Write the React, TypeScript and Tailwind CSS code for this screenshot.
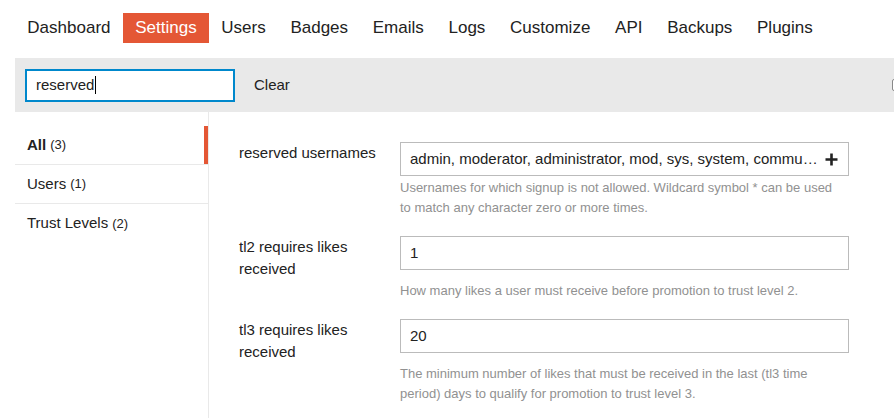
const navItems = [
  "Dashboard",
  "Settings",
  "Users",
  "Badges",
  "Emails",
  "Logs",
  "Customize",
  "API",
  "Backups",
  "Plugins",
];

const categories = [
  { name: "All", count: 3, active: true },
  { name: "Users", count: 1, active: false },
  { name: "Trust Levels", count: 2, active: false },
];

const settings = [
  {
    label: "reserved usernames",
    value: "admin, moderator, administrator, mod, sys, system, commu…",
    list: true,
    desc: "Usernames for which signup is not allowed. Wildcard symbol * can be used to match any character zero or more times.",
  },
  {
    label: "tl2 requires likes received",
    value: "1",
    list: false,
    desc: "How many likes a user must receive before promotion to trust level 2.",
  },
  {
    label: "tl3 requires likes received",
    value: "20",
    list: false,
    desc: "The minimum number of likes that must be received in the last (tl3 time period) days to qualify for promotion to trust level 3.",
  },
];

export default function App() {
  return (
    <div className="h-[418px] w-[894px] overflow-hidden bg-white font-['Liberation_Sans',Arial,sans-serif] text-[#222]">
      {/* top nav */}
      <nav className="flex pb-[15px] pl-[15px] pt-[13px]">
        {navItems.map((item) => (
          <div
            key={item}
            className={
              item === "Settings"
                ? "flex h-[30px] items-center bg-[#e45735] px-[12.35px] text-[17px] text-white"
                : "flex h-[30px] items-center px-[12.35px] text-[17px]"
            }
          >
            {item}
          </div>
        ))}
      </nav>

      {/* filter bar */}
      <div className="ml-[15px] flex h-[54px] items-center overflow-hidden bg-[#e9e9e9] pl-[10px]">
        <div className="flex h-[33px] w-[210px] items-center border-2 border-[#0088cc] bg-white pl-[9px] text-[15px]">
          reserved
          <span className="ml-[1px] h-[18px] w-px bg-black" />
        </div>
        <span className="ml-[19px] text-[15px]">Clear</span>
        <div className="flex-1" />
        <span className="-mr-[11px] h-[12px] w-[13px] rounded-[2px] border border-[#888] bg-white" />
      </div>

      <div className="ml-[15px] flex">
        {/* categories */}
        <aside className="h-[306px] w-[194px] shrink-0 border-r border-[#e9e9e9] pt-[14px]">
          {categories.map((c, i) => (
            <div
              key={c.name}
              className={
                i !== categories.length - 1
                  ? "flex h-[39px] border-b border-[#e9e9e9]"
                  : "flex h-[39px]"
              }
            >
              <div className="flex flex-1 items-center pl-[12px] text-[15px]">
                <span className={c.active ? "font-bold" : ""}>{c.name}</span>
                <span className="ml-[4px] text-[13px]">({c.count})</span>
              </div>
              {c.active ? <div className="w-[4px] bg-[#e45735]" /> : null}
            </div>
          ))}
        </aside>

        {/* settings */}
        <main className="flex-1 pl-[30px] pt-[30px]">
          {settings.map((s) => (
            <div key={s.label} className="mb-[18px]">
              <div className="flex items-start">
                <div className="w-[161px] pr-[10px] text-[15px] leading-[21.5px]">
                  {s.label}
                </div>
                <div className="flex h-[34px] w-[449px] items-center border border-[#bbb] pl-[9px] pr-[10px] text-[15px]">
                  <span className="flex-1 whitespace-nowrap">{s.value}</span>
                  {s.list ? (
                    <svg width="13" height="13" viewBox="0 0 13 13">
                      <path d="M6.5 0.5v12M0.5 6.5h12" stroke="#222" strokeWidth="2.6" />
                    </svg>
                  ) : null}
                </div>
              </div>
              <p className="ml-[161px] mt-[2px] w-[440px] text-[13px] leading-[20px] text-[#919191]">
                {s.desc}
              </p>
            </div>
          ))}
        </main>
      </div>
    </div>
  );
}
